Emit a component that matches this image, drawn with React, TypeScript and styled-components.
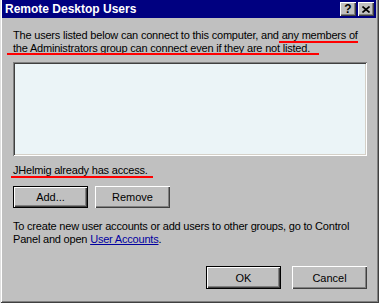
import styled, { createGlobalStyle } from 'styled-components'

const GlobalStyle = createGlobalStyle`
  html, body {
    margin: 0;
    padding: 0;
    background: #c0c0c0;
  }
  * {
    box-sizing: border-box;
  }
`

const WindowStyled = styled.div`
  position: relative;
  width: 379px;
  height: 303px;
  background: #c0c0c0;
  font-family: "Liberation Sans", Arial, sans-serif;
  font-size: 11px;
  letter-spacing: -0.2px;
  color: #000;
  padding: 0 3px 3px 2px;
  display: flex;
  flex-direction: column;
  box-shadow:
    inset 1px 0 #dfdfdf,
    inset -1px -1px #404040,
    inset 2px 0 #fff,
    inset -2px -2px #808080;
`

const TitleBar = styled.div`
  height: 18px;
  background: #000080;
  display: flex;
  align-items: center;
  padding: 0 2px 0 3px;
`

const TitleText = styled.span`
  flex: 1;
  color: #fff;
  font-weight: bold;
  font-size: 12px;
  letter-spacing: 0;
`

const TitleButton = styled.button`
  width: 16px;
  height: 14px;
  margin-left: 2px;
  padding: 0;
  border: none;
  background: #c0c0c0;
  display: flex;
  align-items: center;
  justify-content: center;
  font-family: "Liberation Sans", Arial, sans-serif;
  font-weight: bold;
  font-size: 12px;
  line-height: 1;
  color: #000;
  box-shadow:
    inset 1px 1px #fff,
    inset -1px -1px #404040,
    inset -2px -2px #808080;
`

const Body = styled.div`
  flex: 1;
  display: flex;
  flex-direction: column;
  padding: 11px 9px 0 11px;
`

const Para = styled.p`
  margin: 0;
  line-height: 13px;
  white-space: nowrap;
`

const Mark = styled.span<{ $before: number, $after: number, $drop: number }>`
  position: relative;
  &::after {
    content: '';
    position: absolute;
    left: ${({ $before }) => -$before}px;
    right: ${({ $after }) => -$after}px;
    bottom: ${({ $drop }) => -$drop}px;
    height: 2px;
    background: #f00;
  }
`

const ListBox = styled.div`
  margin-top: 7px;
  height: 94px;
  width: 354px;
  background: #ebf4f7;
  box-shadow:
    inset 1px 1px #808080,
    inset -1px -1px #fff,
    inset 2px 2px #404040,
    inset -2px -2px #d4d0c8;
`

const Status = styled(Para)`
  margin-top: 8px;
`

const ButtonRow = styled.div<{ $justify: string }>`
  display: flex;
  gap: ${({ $justify }) => $justify === 'end' ? '11px' : '7px'};
  justify-content: ${({ $justify }) => $justify === 'end' ? 'flex-end' : 'flex-start'};
`

const WinButton = styled.button<{ $default?: boolean, $height: number }>`
  width: 75px;
  height: ${({ $height }) => $height}px;
  padding: 0;
  border: none;
  background: #c0c0c0;
  font-family: "Liberation Sans", Arial, sans-serif;
  font-size: 11px;
  color: #000;
  box-shadow: ${({ $default }) => $default
    ? 'inset 1px 1px #000, inset -1px -1px #000, inset 2px 2px #fff, inset -2px -2px #404040, inset -3px -3px #808080'
    : 'inset 1px 1px #fff, inset -1px -1px #404040, inset -2px -2px #808080'};
`

const Link = styled.a`
  color: #0000a0;
  text-decoration: underline;
  cursor: pointer;
`

const TopButtons = styled(ButtonRow)`
  margin-top: 9px;
`

const Info = styled(Para)`
  margin-top: 12px;
`

const BottomButtons = styled(ButtonRow)`
  margin-top: 20px;
`

export default function App (): JSX.Element {
  return (
    <>
      <GlobalStyle />
      <WindowStyled>
        <TitleBar>
          <TitleText>Remote Desktop Users</TitleText>
          <TitleButton>?</TitleButton>
          <TitleButton>
            <svg width='8' height='7' viewBox='0 0 8 7'>
              <path d='M0.5 0.5 L7.5 6.5 M7.5 0.5 L0.5 6.5' stroke='#000' strokeWidth='1.6' />
            </svg>
          </TitleButton>
        </TitleBar>
        <Body>
          <Para>
            The users listed below can connect to this computer, and{' '}
            <Mark $before={3} $after={0} $drop={2}>any members of</Mark>
            <br />
            <Mark $before={6} $after={9} $drop={1}>the Administrators group can connect even if they are not listed.</Mark>
          </Para>
          <ListBox />
          <Status>
            <Mark $before={2} $after={5} $drop={2}>JHelmig already has access.</Mark>
          </Status>
          <TopButtons $justify='start'>
            <WinButton $default $height={22}>Add...</WinButton>
            <WinButton $height={22}>Remove</WinButton>
          </TopButtons>
          <Info>
            To create new user accounts or add users to other groups, go to Control
            <br />
            Panel and open <Link>User Accounts</Link>.
          </Info>
          <BottomButtons $justify='end'>
            <WinButton $default $height={23}>OK</WinButton>
            <WinButton $height={23}>Cancel</WinButton>
          </BottomButtons>
        </Body>
      </WindowStyled>
    </>
  )
}
